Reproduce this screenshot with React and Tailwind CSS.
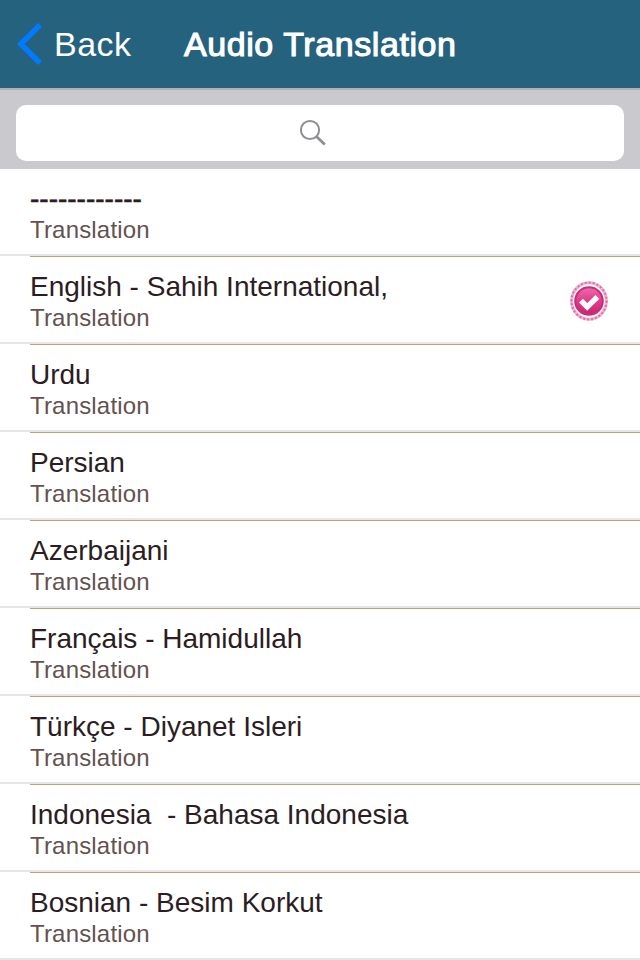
import React, { useState } from 'react';

const translations = [
  '------------',
  'English - Sahih International,',
  'Urdu',
  'Persian',
  'Azerbaijani',
  'Français - Hamidullah',
  'Türkçe - Diyanet Isleri',
  'Indonesia  - Bahasa Indonesia',
  'Bosnian - Besim Korkut',
];

const BackIcon = () => (
  <svg className="w-[26px] h-[42px] shrink-0" viewBox="0 0 26 42" fill="none" stroke="#007aff" strokeWidth="5.4">
    <path d="M24 2 L4.8 21 L24 40" />
  </svg>
);

const SearchIcon = () => (
  <svg className="w-7 h-7" viewBox="0 0 28 28" fill="none" stroke="#8e8e93">
    <circle cx="11" cy="11" r="9.1" strokeWidth="2" />
    <path d="M17.4 17.4 L25.8 25.6" strokeWidth="2.8" />
  </svg>
);

const CheckBadge = () => (
  <svg className="w-[38px] h-10 shrink-0 mt-[2px]" viewBox="0 0 38 40">
    <defs>
      <linearGradient id="badge" x1="0" y1="0" x2="0" y2="1">
        <stop offset="0" stopColor="#ee6bab" />
        <stop offset="0.5" stopColor="#df3c8c" />
        <stop offset="1" stopColor="#c9236f" />
      </linearGradient>
    </defs>
    <ellipse cx="19" cy="20" rx="17.4" ry="18.2" fill="#fff" stroke="#f3b3d1" strokeWidth="3" />
    <ellipse cx="19" cy="20" rx="17.6" ry="18.4" fill="none" stroke="#dd6fa3" strokeWidth="2" strokeDasharray="2 2" />
    <circle cx="19" cy="20" r="13.8" fill="url(#badge)" stroke="#c4307a" strokeWidth="2" />
    <path d="M11 19.6 L17.2 26 L27.4 15.8" fill="none" stroke="#fff" strokeWidth="5.4" />
  </svg>
);

const App = () => {
  const [selected, setSelected] = useState(1);

  return (
    <div className="w-[640px] h-[960px] overflow-hidden bg-white font-['Liberation_Sans',Arial,sans-serif]">
      {/* Navigation bar */}
      <header className="flex items-center h-[88px] pl-4 bg-[#25627e] text-white text-[34px] leading-none">
        <button className="flex items-center gap-3">
          <BackIcon />
          <span className="w-[76px] text-left tracking-[0.5px]">Back</span>
        </button>
        <h1 className="ml-[54px] tracking-[0.58px] whitespace-nowrap [-webkit-text-stroke:1.1px_white]">
          Audio Translation
        </h1>
      </header>

      {/* Search */}
      <div className="h-[81px] px-4 pt-[15px] bg-[#c9c9ce] border-t-2 border-[#b1b1b5]">
        <div className="flex items-center justify-center h-14 pr-[14px] rounded-[10px] bg-white">
          <SearchIcon />
        </div>
      </div>

      <ul>
        {translations.map((name, index) => (
          <li key={name} onClick={() => setSelected(index)}>
            <div className="flex items-center justify-between h-[87px] pl-[30px] pr-8 border-b-2 border-[#e6e6e7]">
              <div className="pt-1">
                <div
                  className={`text-[28px] leading-8 text-[#2b1d22] whitespace-pre ${
                    index === 0 ? '[-webkit-text-stroke:0.6px_#2b1d22]' : ''
                  }`}
                >
                  {name}
                </div>
                <div className="text-2xl leading-[30px] tracking-[0.18px] text-[#63524f]">Translation</div>
              </div>
              {selected === index && <CheckBadge />}
            </div>
            <div className="h-px ml-[30px] bg-[#c3a376]" />
          </li>
        ))}
      </ul>
    </div>
  );
};

export default App;
